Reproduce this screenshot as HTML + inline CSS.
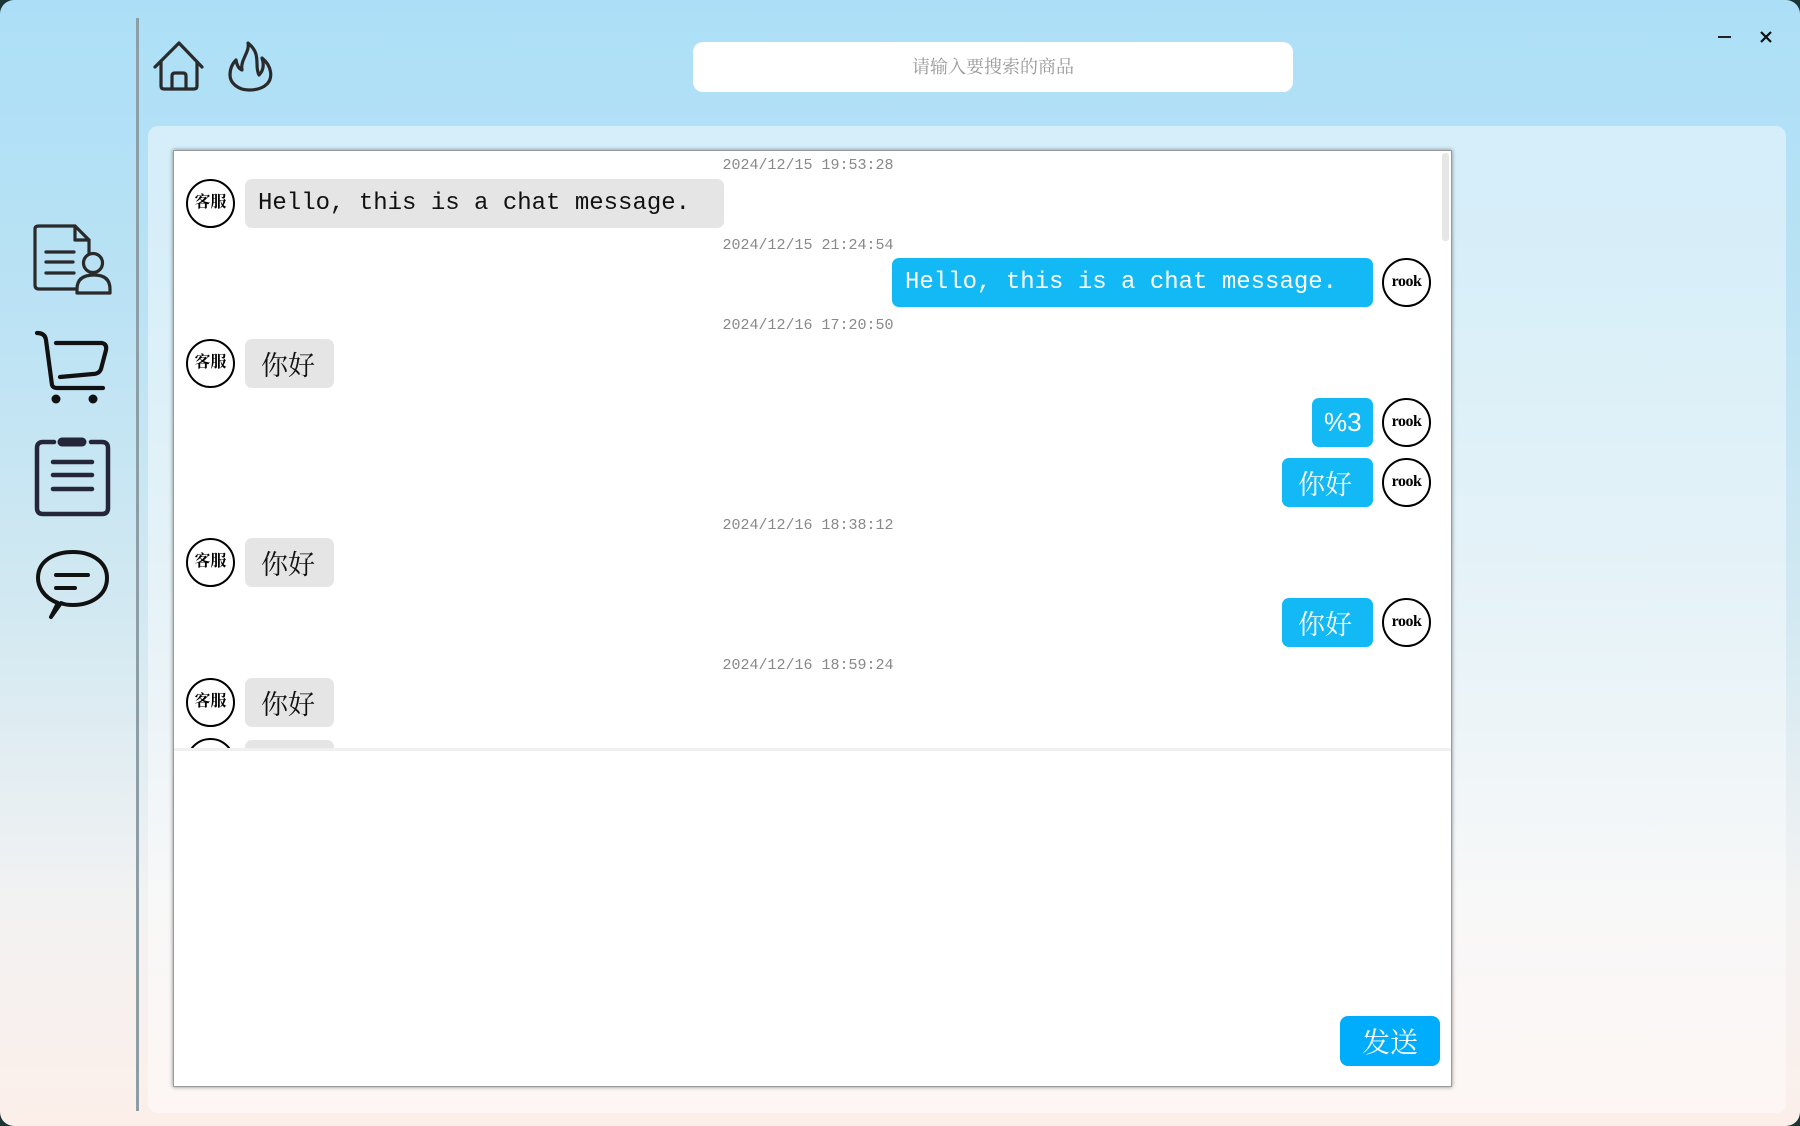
<!DOCTYPE html>
<html><head><meta charset="utf-8"><style>
*{margin:0;padding:0;box-sizing:border-box}
html,body{width:1800px;height:1126px;overflow:hidden;background:#1b3434}
#win{position:absolute;left:0;top:0;width:1800px;height:1126px;border-radius:14px;overflow:hidden;background:linear-gradient(180deg,#acdff7 0%,#b9e2f4 25%,#d3e9f2 55%,#f2f2f2 80%,#fcefea 100%)}
.abs{position:absolute}
#divline{left:136px;top:18px;width:3px;height:1093px;background:#8e9ea6}
#search{left:693px;top:42px;width:600px;height:50px;background:#fff;border-radius:10px;font:18px "Liberation Serif","Noto Serif CJK SC",serif;color:#999;text-align:center;line-height:50px}
#panel{left:148px;top:126px;width:1638px;height:987px;border-radius:10px;background:rgba(255,255,255,.45)}
#chat{left:173px;top:150px;width:1279px;height:937px;background:#fff;border:1px solid #9a9a9a;box-shadow:0 0 4px rgba(0,0,0,.45)}
#sep{left:174px;top:748px;width:1277px;height:3px;background:#f0f0f0}
#thumb{left:1442px;top:153px;width:7px;height:88px;background:#e6e6e6;border-radius:3px}
.ts{position:absolute;left:700px;width:216px;text-align:center;font:15px "Liberation Mono",monospace;color:#888;line-height:18px}
.b{position:absolute;height:49px;border-radius:7px;font:24px "Liberation Mono","Noto Serif CJK SC",monospace;line-height:49px;padding-left:13px;white-space:nowrap}
.l{background:#e5e5e5;color:#111}
.r{background:#12b9f4;color:#fff}
.cn{font:27px "Noto Serif CJK SC","Noto Sans CJK SC",serif;line-height:49px;padding-left:16px}
.av{position:absolute;width:49px;height:49px;border:2px solid #000;border-radius:50%;background:#fff;text-align:center;font:bold 16px "Liberation Serif","Noto Serif CJK SC",serif;line-height:44px;color:#000}
.av.k{letter-spacing:-0.5px;font-size:16px}
#send{left:1340px;top:1016px;width:100px;height:50px;background:#00adfd;border-radius:8px;color:#fff;font:28px "Noto Serif CJK SC",serif;text-align:center;line-height:50px}
#min{left:1718px;top:36px;width:13px;height:2px;background:#222}
</style></head><body><div id="win">
<div id="divline" class="abs"></div>
<svg class="abs" style="left:0;top:0" width="300" height="700" fill="none" stroke-linecap="round" stroke-linejoin="round">
<g stroke="#2a2a2a" stroke-width="3.2">
<path d="M155 67 L179 43 L202 67 M161 62 V86 Q161 89 164 89 H194 Q197 89 197 86 V62"/>
<path d="M172 89 V76 Q172 73 175 73 H183 Q186 73 186 76 V89"/>
<path d="M248 43 C262 54 254 66 259 75 C264 70 264 64 262 58 C272 66 273 78 267 84 C262 89 255 90 249 90 C238 90 230 83 230 75 C230 68 233 63 236 60 C237 66 239 69 242 70 C240 60 250 52 248 43 Z"/>
</g>
<g stroke="#2a2a2a" stroke-width="3.2">
<path d="M76 289 H39 Q35 289 35 285 V229 Q35 226 39 226 H75 L89 240 V253"/>
<path d="M75 226 V240 H89"/>
<path d="M46 252 H74 M46 262 H73 M46 273 H74"/>
<circle cx="93" cy="263" r="9.5"/>
<path d="M77 293 V289 Q77 275 94 275 Q110 275 110 289 V293 Z"/>
</g>
<g stroke="#111" stroke-width="4.2">
<path d="M37 333 Q45 333 46 340 L52 385 Q53 388 57 388 H103"/>
<path d="M56 343 H102 Q107 344 106 350 L101 369 Q99 374 93 374 L60 377"/>
</g>
<circle cx="56" cy="399" r="4.5" fill="#111"/><circle cx="93" cy="399" r="4.5" fill="#111"/>
<g stroke="#26263a" stroke-width="4.5">
<path d="M54 442 H43 Q37 442 37 448 V508 Q37 514 43 514 H102 Q108 514 108 508 V448 Q108 442 102 442 H91"/>
<path d="M62 442 H82" stroke-width="9"/>
<path d="M53 462 H92 M53 475 H92 M53 489 H92"/>
</g>
<g stroke="#111" stroke-width="4">
<path d="M58 603 C42 597 38 585 38 578 C38 561 54 552 73 552 C92 552 107 562 107 578 C107 596 90 605 73 605 C68 605 63 604 61 603 L51 617 Z"/>
<path d="M56 575 H88 M56 588 H75"/>
</g>
</svg>
<div id="search" class="abs">请输入要搜索的商品</div>
<div id="min" class="abs"></div>
<svg class="abs" style="left:1759px;top:30px" width="14" height="14"><path d="M2 2 L12 12 M12 2 L2 12" stroke="#111" stroke-width="2.2"/></svg>
<div id="panel" class="abs"></div>
<div id="chat" class="abs"></div>
<div id="thumb" class="abs"></div>
<div id="sep" class="abs"></div>
<div class="ts" style="top:157px">2024/12/15 19:53:28</div>
<div class="av" style="left:186px;top:179px">客服</div>
<div class="b l" style="left:245px;top:179px;width:479px">Hello, this is a chat message.</div>
<div class="ts" style="top:237px">2024/12/15 21:24:54</div>
<div class="b r" style="left:892px;top:258px;width:481px">Hello, this is a chat message.</div>
<div class="av k" style="left:1382px;top:258px">rook</div>
<div class="ts" style="top:317px">2024/12/16 17:20:50</div>
<div class="av" style="left:186px;top:339px">客服</div>
<div class="b l cn" style="left:245px;top:339px;width:89px">你好</div>
<div class="b r" style="left:1312px;top:398px;width:61px;font-size:26px;font-family:'Liberation Sans',sans-serif;padding-left:12px">%3</div>
<div class="av k" style="left:1382px;top:398px">rook</div>
<div class="b r cn" style="left:1282px;top:458px;width:91px">你好</div>
<div class="av k" style="left:1382px;top:458px">rook</div>
<div class="ts" style="top:517px">2024/12/16 18:38:12</div>
<div class="av" style="left:186px;top:538px">客服</div>
<div class="b l cn" style="left:245px;top:538px;width:89px">你好</div>
<div class="b r cn" style="left:1282px;top:598px;width:91px">你好</div>
<div class="av k" style="left:1382px;top:598px">rook</div>
<div class="ts" style="top:657px">2024/12/16 18:59:24</div>
<div class="av" style="left:186px;top:678px">客服</div>
<div class="b l cn" style="left:245px;top:678px;width:89px">你好</div>
<div class="abs" style="left:174px;top:736px;width:1268px;height:12px;overflow:hidden">
<div class="av" style="left:12px;top:2px"></div>
<div class="b l" style="left:71px;top:4px;width:89px"></div>
</div>
<div id="send" class="abs">发送</div>
</div></body></html>
